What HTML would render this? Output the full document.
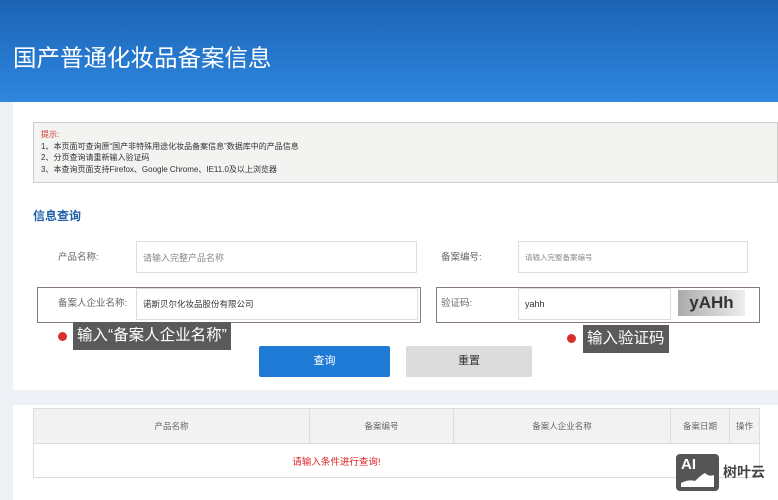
<!DOCTYPE html>
<html><head><meta charset="utf-8"><style>
*{margin:0;padding:0;box-sizing:border-box}
body{width:778px;height:500px;overflow:hidden;background:#edf1f6;font-family:"Liberation Sans","Noto Sans CJK SC",sans-serif;position:relative;color:#555}
.a{position:absolute}
.hdr{left:0;top:0;width:778px;height:102px;background:linear-gradient(180deg,#1d63b4 0%,#2679cf 60%,#2f86dc 100%)}
.hdr h1{position:absolute;left:13px;top:39px;font-size:23.5px;font-weight:normal;color:#fff}
.panel{left:13px;top:102px;width:765px;height:288px;background:#fff}
.note{left:33px;top:122px;width:745px;height:61px;background:#f3f3f1;border:1px solid #ccc;font-size:8px;line-height:11.5px;padding:6px 0 0 7px;color:#333}
.inp{background:#fff;border:1px solid #ddd;font-size:9px;color:#888;padding-left:6px;display:flex;align-items:center}
.lbl{font-size:9.5px;color:#666;line-height:12px}
.tip{background:#5a5a5a;color:#fff;font-size:15.5px;line-height:28px;padding:0 4px}
.dot{width:9px;height:9px;border-radius:50%;background:#d9302c}
.t2{left:13px;top:405px;width:765px;height:95px;background:#fff}
table{border-collapse:collapse;font-size:8.5px;color:#666}
td{border:1px solid #ddd;text-align:center}
</style></head><body>
<div class="a hdr"><h1>国产普通化妆品备案信息</h1></div>
<div class="a panel"></div>
<div class="a note"><div style="color:#c33">提示:</div>1、本页面可查询原“国产非特殊用途化妆品备案信息”数据库中的产品信息<br>2、分页查询请重新输入验证码<br>3、本查询页面支持Firefox、Google Chrome、IE11.0及以上浏览器</div>
<div class="a" style="left:33px;top:207px;font-size:12px;font-weight:bold;color:#1e5fa8">信息查询</div>
<div class="a lbl" style="left:58px;top:252px">产品名称:</div>
<div class="a inp" style="left:136px;top:241px;width:281px;height:32px">请输入完整产品名称</div>
<div class="a lbl" style="left:441px;top:252px">备案编号:</div>
<div class="a inp" style="left:518px;top:241px;width:230px;height:32px;font-size:7.5px">请输入完整备案编号</div>
<div class="a" style="left:37px;top:287px;width:384px;height:36px;border:1px solid #8a7a78"></div>
<div class="a lbl" style="left:58px;top:298px">备案人企业名称:</div>
<div class="a inp" style="left:136px;top:288px;width:282px;height:32px;color:#333;font-size:8.5px">诺斯贝尔化妆品股份有限公司</div>
<div class="a" style="left:436px;top:287px;width:324px;height:36px;border:1px solid #8a7a78"></div>
<div class="a lbl" style="left:441px;top:298px">验证码:</div>
<div class="a inp" style="left:518px;top:288px;width:153px;height:32px;color:#333">yahh</div>
<div class="a" style="left:678px;top:290px;width:67px;height:26px;background:linear-gradient(90deg,#aaa,#eee);font-size:17px;font-weight:bold;color:#333;text-align:center;line-height:26px">yAHh</div>
<div class="a dot" style="left:58px;top:332px"></div>
<div class="a tip" style="left:73px;top:322px">输入“备案人企业名称”</div>
<div class="a dot" style="left:567px;top:334px"></div>
<div class="a tip" style="left:583px;top:325px">输入验证码</div>
<div class="a" style="left:259px;top:346px;width:131px;height:31px;background:#1f7ad6;border-radius:2px;color:#fff;font-size:11px;text-align:center;line-height:31px">查询</div>
<div class="a" style="left:406px;top:346px;width:126px;height:31px;background:#dcdcdc;border-radius:2px;color:#333;font-size:11px;text-align:center;line-height:31px">重置</div>
<div class="a t2"></div>
<table class="a" style="left:33px;top:408px;width:727px">
<tr style="background:#f2f2f2;height:35px"><td style="width:276px">产品名称</td><td style="width:144px">备案编号</td><td style="width:217px">备案人企业名称</td><td style="width:59px">备案日期</td><td>操作</td></tr>
<tr style="height:34px"><td colspan="5" style="color:#d22;font-size:9.5px;padding-right:120px">请输入条件进行查询!</td></tr>
</table>
<div class="a" style="left:676px;top:454px;width:43px;height:37px;background:#555;border-radius:4px;color:#fff;font-weight:bold;font-size:15px;padding:2px 0 0 5px;line-height:18px">AI<svg width="33" height="16" style="position:absolute;left:5px;bottom:4px"><path d="M0 16 L0 12 Q8 8 14 10 Q20 4 24 2 Q28 6 33 4 L33 16Z" fill="#fff"/></svg></div>
<div class="a" style="left:723px;top:462px;font-size:14px;color:#444;font-weight:bold">树叶云</div>
</body></html>
